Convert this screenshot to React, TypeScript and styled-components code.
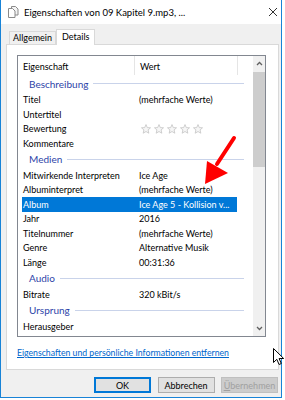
import styled, { createGlobalStyle } from 'styled-components'

const GlobalStyle = createGlobalStyle`
  body {
    margin: 0;
    background: #ffffff;
    font-family: Lato, "Noto Sans", sans-serif;
  }
`

const Window = styled.div`
  position: relative;
  box-sizing: border-box;
  width: 282px;
  height: 398px;
  border: 1px solid #1883d7;
  border-top: none;
  display: flex;
  flex-direction: column;
  background: #f0f0f0;
`

const TitleBar = styled.div`
  height: 24px;
  background: #ffffff;
  display: flex;
  align-items: center;
  padding: 0 3px 0 6px;
`

const Title = styled.span`
  margin-left: 5px;
  font-size: 9.5px;
  color: #000;
  white-space: nowrap;
`

const Close = styled.div`
  margin-left: auto;
  width: 11px;
  height: 11px;
  display: flex;
  align-items: center;
  justify-content: center;
`

const Body = styled.div`
  flex: 1;
  display: flex;
  flex-direction: column;
  padding: 5px 2px 0 5px;
`

const TabStrip = styled.div`
  display: flex;
  align-items: flex-end;
  padding-left: 3px;
  margin-bottom: -1px;
  position: relative;
  z-index: 1;
  height: 16px;
`

const Tab = styled.div<{ $active?: boolean }>`
  box-sizing: border-box;
  height: ${p => (p.$active ? '16px' : '14px')};
  padding: ${p => (p.$active ? '0 5px' : '0 3px')};
  border: 1px solid #d9d9d9;
  border-bottom: ${p => (p.$active ? 'none' : '1px solid #d9d9d9')};
  background: ${p => (p.$active ? '#ffffff' : '#f0f0f0')};
  font-size: 9px;
  line-height: ${p => (p.$active ? '14px' : '12px')};
  color: #000;
`

const Panel = styled.div`
  box-sizing: border-box;
  height: 326px;
  border: 1px solid #d9d9d9;
  background: #ffffff;
  padding: 10px 11px 0 10px;
`

const ListView = styled.div`
  box-sizing: border-box;
  width: 249px;
  height: 282px;
  border: 1px solid #828790;
  display: flex;
`

const ListContent = styled.div`
  flex: 1;
  overflow: hidden;
  font-size: 9px;
  color: #000;
`

const HeaderRow = styled.div`
  display: flex;
  height: 19px;
  align-items: stretch;
`

const HeaderCell = styled.div<{ $w: number }>`
  box-sizing: border-box;
  width: ${p => p.$w}px;
  padding-left: 5px;
  border-right: 1px solid #e5e5e5;
  display: flex;
  align-items: center;
  padding-top: 2px;
`

const Group = styled.div`
  height: 17.5px;
  width: 226px;
  display: flex;
  align-items: center;
  padding-left: 11px;
  box-sizing: border-box;
  color: #2d44a8;
  font-size: 10px;
`

const GroupLine = styled.div`
  flex: 1;
  height: 1px;
  margin-left: 5px;
  background: #c9d3ea;
`

const Row = styled.div<{ $selected?: boolean }>`
  display: flex;
  height: 14.5px;
  align-items: center;
  margin-left: 4px;
  width: 215px;
  background: ${p => (p.$selected ? '#0078d7' : 'transparent')};
  color: ${p => (p.$selected ? '#ffffff' : '#000000')};
  white-space: nowrap;
`

const NameCell = styled.div`
  width: 111px;
  padding-left: 1px;
  overflow: hidden;
`

const ValueCell = styled.div`
  flex: 1;
  padding-left: 5px;
  overflow: hidden;
  display: flex;
  align-items: center;
`

const Stars = styled.div`
  display: flex;
  gap: 3px;
  margin-left: 2px;
`

const ScrollBar = styled.div`
  width: 12px;
  background: #f0f0f0;
  display: flex;
  flex-direction: column;
`

const ScrollArrow = styled.div`
  height: 15px;
  display: flex;
  align-items: center;
  justify-content: center;
`

const Thumb = styled.div`
  height: 95px;
  margin-top: 1px;
  background: #cdcdcd;
`

const Spacer = styled.div`
  flex: 1;
`

const Link = styled.a`
  display: block;
  margin-top: 10px;
  font-size: 8.7px;
  line-height: 12px;
  color: #0066cc;
  text-decoration: underline;
`

const ButtonRow = styled.div`
  display: flex;
  justify-content: flex-end;
  gap: 6.5px;
  margin-top: 7px;
  padding-right: 1px;
`

const Button = styled.div<{ $variant?: 'default' | 'disabled' }>`
  box-sizing: border-box;
  width: 57px;
  height: 16px;
  display: flex;
  align-items: center;
  justify-content: center;
  font-size: 9px;
  white-space: nowrap;
  border: 1px solid
    ${p => (p.$variant === 'default' ? '#0078d7' : p.$variant === 'disabled' ? '#bfbfbf' : '#adadad')};
  box-shadow: ${p => (p.$variant === 'default' ? 'inset 0 0 0 1px #0078d7' : 'none')};
  background: ${p => (p.$variant === 'disabled' ? '#cccccc' : '#e1e1e1')};
  color: ${p => (p.$variant === 'disabled' ? '#a0a0a0' : '#000000')};
`

const AccessKey = styled.span`
  text-decoration: underline;
`

const Annotation = styled.svg`
  position: absolute;
  left: 195px;
  top: 130px;
`

const Cursor = styled.svg`
  position: absolute;
  left: 272px;
  top: 348px;
`

function Star() {
  return (
    <svg width="10" height="10" viewBox="0 0 10 10">
      <polygon
        points="5,0.6 6.3,3.6 9.5,3.8 7.1,5.9 7.8,9.2 5,7.5 2.2,9.2 2.9,5.9 0.5,3.8 3.7,3.6"
        fill="#f6f6f6"
        stroke="#c4c4c4"
        strokeWidth="0.8"
      />
    </svg>
  )
}

function Chevron({ up }: { up?: boolean }) {
  return (
    <svg width="7" height="5" viewBox="0 0 7 5">
      <polyline
        points={up ? '1,4 3.5,1.5 6,4' : '1,1 3.5,3.5 6,1'}
        fill="none"
        stroke="#606060"
        strokeWidth="1.3"
      />
    </svg>
  )
}

type Item =
  | { kind: 'group'; label: string }
  | { kind: 'row'; name: string; value?: string; stars?: boolean; selected?: boolean }

const items: Item[] = [
  { kind: 'group', label: 'Beschreibung' },
  { kind: 'row', name: 'Titel', value: '(mehrfache Werte)' },
  { kind: 'row', name: 'Untertitel' },
  { kind: 'row', name: 'Bewertung', stars: true },
  { kind: 'row', name: 'Kommentare' },
  { kind: 'group', label: 'Medien' },
  { kind: 'row', name: 'Mitwirkende Interpreten', value: 'Ice Age' },
  { kind: 'row', name: 'Albuminterpret', value: '(mehrfache Werte)' },
  { kind: 'row', name: 'Album', value: 'Ice Age 5 - Kollision v...', selected: true },
  { kind: 'row', name: 'Jahr', value: '2016' },
  { kind: 'row', name: 'Titelnummer', value: '(mehrfache Werte)' },
  { kind: 'row', name: 'Genre', value: 'Alternative Musik' },
  { kind: 'row', name: 'Länge', value: '00:31:36' },
  { kind: 'group', label: 'Audio' },
  { kind: 'row', name: 'Bitrate', value: '320 kBit/s' },
  { kind: 'group', label: 'Ursprung' },
  { kind: 'row', name: 'Herausgeber' },
]

export default function App() {
  return (
    <>
      <GlobalStyle />
      <Window>
        <TitleBar>
          <svg width="12" height="12" viewBox="0 0 12 12">
            <path d="M4.5 0.5h4l2.5 2.5v6h-6.5z" fill="#f4f4f4" stroke="#8a8a8a" strokeWidth="1" />
            <path d="M1.5 2.5h4l2.5 2.5v6.5h-6.5z" fill="#ffffff" stroke="#8a8a8a" strokeWidth="1" />
          </svg>
          <Title>Eigenschaften von 09 Kapitel 9.mp3, ...</Title>
          <Close>
            <svg width="10" height="10" viewBox="0 0 10 10">
              <path d="M1 1L9 9M9 1L1 9" stroke="#333" strokeWidth="1" />
            </svg>
          </Close>
        </TitleBar>
        <Body>
          <TabStrip>
            <Tab>Allgemein</Tab>
            <Tab $active>Details</Tab>
          </TabStrip>
          <Panel>
            <ListView>
              <ListContent>
                <HeaderRow>
                  <HeaderCell $w={117}>Eigenschaft</HeaderCell>
                  <HeaderCell $w={103}>Wert</HeaderCell>
                </HeaderRow>
                {items.map((it, i) =>
                  it.kind === 'group' ? (
                    <Group key={i}>
                      {it.label}
                      <GroupLine />
                    </Group>
                  ) : (
                    <Row key={i} $selected={it.selected}>
                      <NameCell>{it.name}</NameCell>
                      <ValueCell>
                        {it.stars ? (
                          <Stars>
                            <Star />
                            <Star />
                            <Star />
                            <Star />
                            <Star />
                          </Stars>
                        ) : (
                          it.value
                        )}
                      </ValueCell>
                    </Row>
                  ),
                )}
              </ListContent>
              <ScrollBar>
                <ScrollArrow>
                  <Chevron up />
                </ScrollArrow>
                <Thumb />
                <Spacer />
                <ScrollArrow>
                  <Chevron />
                </ScrollArrow>
              </ScrollBar>
            </ListView>
            <Link>Eigenschaften und persönliche Informationen entfernen</Link>
          </Panel>
          <ButtonRow>
            <Button $variant="default">OK</Button>
            <Button>Abbrechen</Button>
            <Button $variant="disabled">
              <AccessKey>Ü</AccessKey>bernehmen
            </Button>
          </ButtonRow>
        </Body>
        <Annotation width="45" height="60" viewBox="0 0 45 60">
          <path d="M38 8L21 34" stroke="#ff0000" strokeWidth="4" strokeLinecap="round" />
          <polygon points="11,31 32,43 9,54" fill="#ff0000" />
        </Annotation>
        <Cursor width="12" height="18" viewBox="0 0 12 18">
          <path d="M0.5 0.5v14l3.3-3.2 2.3 5.2 2.2-1-2.2-5h4.6z" fill="#ffffff" stroke="#000" strokeWidth="1" />
        </Cursor>
      </Window>
    </>
  )
}
